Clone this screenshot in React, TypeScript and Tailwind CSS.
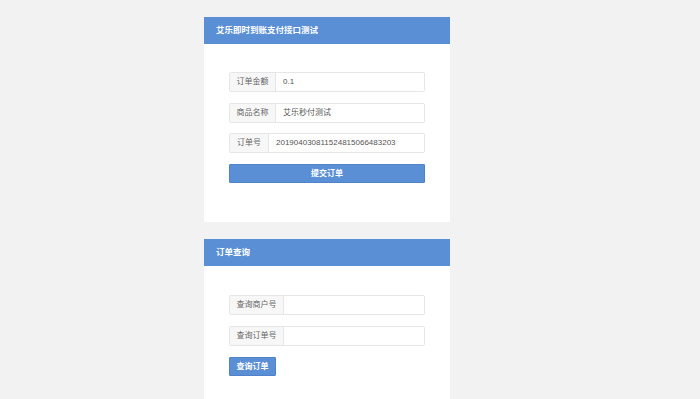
import React from 'react'

const font = { fontFamily: '"Liberation Sans", "Noto Sans CJK SC", sans-serif' }

function Field({ label, value, labelW }: { label: string; value?: string; labelW: string }) {
  return (
    <div className="flex h-[20px] border border-[#e6e6e6] rounded-[2px] text-[8px] leading-none">
      <div className={`${labelW} shrink-0 flex items-center justify-center bg-[#f7f7f7] border-r border-[#e6e6e6] text-[#666]`}>
        {label}
      </div>
      <div className="flex-1 flex items-center pl-[7px] bg-white text-[#555]">{value}</div>
    </div>
  )
}

function Panel({ title, children, body }: { title: string; children: React.ReactNode; body: string }) {
  return (
    <div className="bg-white">
      <div className="h-[27px] bg-[#5b8fd5] flex items-center pl-[12px] text-white text-[8.5px] font-bold">
        {title}
      </div>
      <div className={body}>{children}</div>
    </div>
  )
}

export default function App() {
  return (
    <div className="min-h-screen bg-[#f2f2f2] pt-[17px] pb-[20px]" style={font}>
      <div className="ml-[204px] w-[246px] flex flex-col gap-[17px]">
        <Panel title="艾乐即时到账支付接口测试" body="px-[25px] pt-[28px] pb-[39px] flex flex-col">
          <Field label="订单金额" value="0.1" labelW="w-[46px]" />
          <div className="h-[11px]" />
          <Field label="商品名称" value="艾乐秒付测试" labelW="w-[46px]" />
          <div className="h-[10px]" />
          <Field label="订单号" value="201904030811524815066483203" labelW="w-[39px]" />
          <button className="mt-[11px] h-[19px] bg-[#5b8fd5] border border-[#4f82c8] rounded-[1px] text-white text-[8px] font-bold leading-none">
            提交订单
          </button>
        </Panel>
        <Panel title="订单查询" body="px-[25px] pt-[29px] pb-[40px] flex flex-col">
          <Field label="查询商户号" labelW="w-[54px]" />
          <div className="h-[11px]" />
          <Field label="查询订单号" labelW="w-[54px]" />
          <button className="mt-[11px] self-start w-[47px] h-[19px] bg-[#5b8fd5] border border-[#4f82c8] rounded-[1px] text-white text-[8px] font-bold leading-none">
            查询订单
          </button>
        </Panel>
      </div>
    </div>
  )
}
